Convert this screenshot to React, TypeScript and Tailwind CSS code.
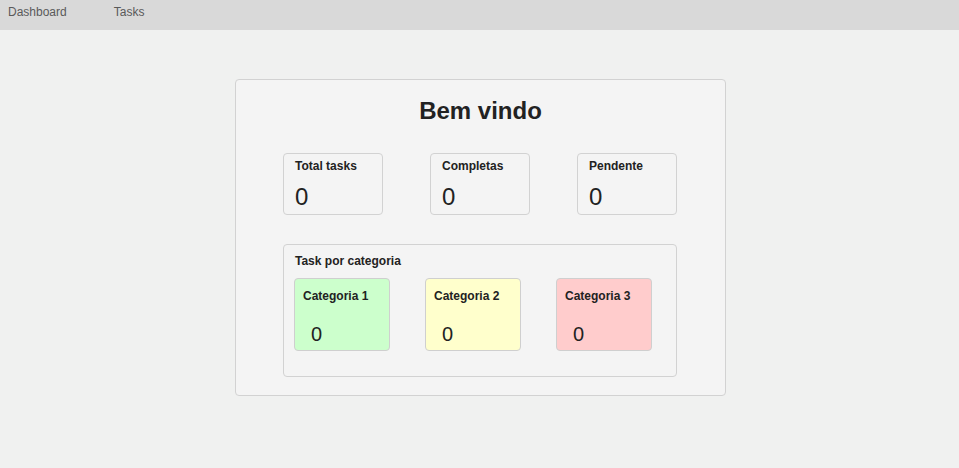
import React from "react";

const stats = [
  { label: "Total tasks", value: 0 },
  { label: "Completas", value: 0 },
  { label: "Pendente", value: 0 },
];

const cats = [
  { label: "Categoria 1", value: 0, bg: "bg-[#ccffcc]" },
  { label: "Categoria 2", value: 0, bg: "bg-[#ffffcc]" },
  { label: "Categoria 3", value: 0, bg: "bg-[#ffcccc]" },
];

export default function App() {
  return (
    <div
      className="min-h-[468px] bg-[#f0f1f0] text-[#222]"
      style={{ fontFamily: '"Liberation Sans", Arial, sans-serif' }}
    >
      <nav className="h-[30px] bg-[#d9d9d9] flex items-start pt-[5px] text-[12px] leading-[14px] text-[#5a5a5a]">
        <a className="ml-[8px]">Dashboard</a>
        <a className="ml-[47px]">Tasks</a>
      </nav>
      <main className="flex pt-[49px] pl-[235px]">
        <div className="w-[491px] border border-[#d2d2d2] rounded-[4px] bg-[#f4f4f4] pt-[17px] pb-[18px] px-[47px]">
          <h1 className="text-center text-[24px] leading-[28px] font-bold">Bem vindo</h1>
          <div className="mt-[28px] w-[394px] flex gap-[47px]">
            {stats.map((s) => (
              <div
                key={s.label}
                className="w-[100px] h-[62px] border border-[#d2d2d2] rounded-[4px] pt-[5px] px-[11px]"
              >
                <div className="text-[12px] leading-[14px] font-bold">{s.label}</div>
                <div className="mt-[10px] text-[24px] leading-[28px]">{s.value}</div>
              </div>
            ))}
          </div>
          <div className="mt-[29px] w-[394px] h-[133px] border border-[#d2d2d2] rounded-[4px] pt-[9px] px-[10px]">
            <div className="ml-[1px] text-[12px] leading-[14px] font-bold">Task por categoria</div>
            <div className="mt-[10px] flex gap-[35px]">
              {cats.map((c) => (
                <div
                  key={c.label}
                  className={`w-[96px] h-[73px] border border-[#cfcfcf] rounded-[4px] ${c.bg} pt-[10px] px-[8px]`}
                >
                  <div className="text-[12px] leading-[14px] font-bold">{c.label}</div>
                  <div className="mt-[19px] pl-[8px] text-[20px] leading-[24px]">{c.value}</div>
                </div>
              ))}
            </div>
          </div>
        </div>
      </main>
    </div>
  );
}
